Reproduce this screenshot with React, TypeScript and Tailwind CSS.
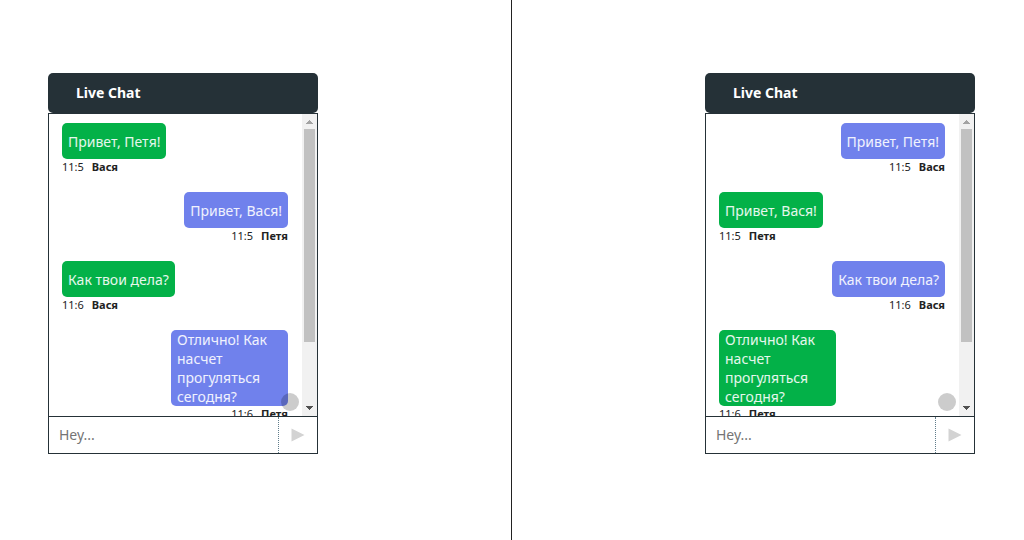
import { useRef, useState } from 'react';
import type { FormEvent } from 'react';

type Message = { author: string; time: string; text: string };

const initialMessages: Message[] = [
  { author: 'Вася', time: '11:5', text: 'Привет, Петя!' },
  { author: 'Петя', time: '11:5', text: 'Привет, Вася!' },
  { author: 'Вася', time: '11:6', text: 'Как твои дела?' },
  { author: 'Петя', time: '11:6', text: 'Отлично! Как насчет прогуляться сегодня?' },
];

function Bubble({ message, own }: { message: Message; own: boolean }) {
  return (
    <li className={`flex flex-col ${own ? 'items-end' : 'items-start'}`}>
      <p
        className={`flex min-h-9 max-w-[117px] items-center rounded-[5px] px-1.5 text-sm leading-[19px] text-white/90 ${
          own ? 'bg-[#7081ec]' : 'bg-[#03b148]'
        }`}
      >
        {message.text}
      </p>
      <p className="flex gap-2 text-[11px] leading-4 text-[#222]">
        <time>{message.time}</time>
        <b>{message.author}</b>
      </p>
    </li>
  );
}

function ScrollBar({ onScroll }: { onScroll: (delta: number) => void }) {
  return (
    <div className="flex w-[15px] shrink-0 flex-col bg-[#f1f1f1]">
      <button
        type="button"
        aria-label="Вверх"
        onClick={() => onScroll(-40)}
        className="flex h-[15px] items-center justify-center"
      >
        <svg width="7" height="4" viewBox="0 0 7 4" fill="#a3a3a3" shapeRendering="crispEdges">
          <path d="M3 0h1v1h1v1h1v1h1v1H0V3h1V2h1V1h1z" />
        </svg>
      </button>
      <div className="flex grow flex-col px-0.5">
        <div className="h-[213px] bg-[#c1c1c1]" />
      </div>
      <button
        type="button"
        aria-label="Вниз"
        onClick={() => onScroll(40)}
        className="flex h-[15px] items-center justify-center pb-0.5"
      >
        <svg width="7" height="4" viewBox="0 0 7 4" fill="#505050" shapeRendering="crispEdges">
          <path d="M0 0h7v1H6v1H5v1H4v1H3V3H2V2H1V1H0z" />
        </svg>
      </button>
    </div>
  );
}

function ChatWidget({
  user,
  messages,
  onSend,
}: {
  user: string;
  messages: Message[];
  onSend: (author: string, text: string) => void;
}) {
  const [draft, setDraft] = useState('');
  const list = useRef<HTMLUListElement>(null);

  const submit = (event: FormEvent) => {
    event.preventDefault();
    if (!draft.trim()) return;
    onSend(user, draft.trim());
    setDraft('');
  };

  return (
    <section className="w-[270px]">
      <header className="flex h-10 items-center rounded-[5px] bg-[#253137] px-7">
        <h2 className="text-sm font-bold text-white">Live Chat</h2>
      </header>
      <div className="border border-[#253137]">
        <div className="relative flex h-[302px]">
          <ul
            ref={list}
            className="flex grow flex-col gap-[17px] overflow-y-auto px-[13px] pt-[9px] pr-[14px] pb-4 [scrollbar-width:none]"
          >
            {messages.map((message, index) => (
              <Bubble key={index} message={message} own={message.author === user} />
            ))}
          </ul>
          <ScrollBar onScroll={(delta) => list.current?.scrollBy({ top: delta })} />
          <button
            type="button"
            aria-label="К последнему сообщению"
            onClick={() => list.current?.scrollTo({ top: list.current.scrollHeight })}
            className="absolute right-[18px] bottom-[5px] size-[18px] rounded-full bg-black/20"
          />
        </div>
        <form onSubmit={submit} className="flex h-[37px] border-t border-[#253137]">
          <input
            type="text"
            aria-label="Сообщение"
            placeholder="Hey..."
            value={draft}
            onChange={(event) => setDraft(event.target.value)}
            className="min-w-0 grow px-2.5 text-sm outline-none placeholder:text-[#757575]"
          />
          <button
            type="submit"
            aria-label="Отправить"
            className="flex w-[39px] items-center justify-center border-l border-dotted border-[#607d8b]"
          >
            <svg width="14" height="14" viewBox="0 0 14 14" fill="#d3d3d3">
              <path d="M0.5 0.5L13.5 7L0.5 13.5z" />
            </svg>
          </button>
        </form>
      </div>
    </section>
  );
}

export default function App() {
  const [messages, setMessages] = useState(initialMessages);

  const send = (author: string, text: string) => {
    const now = new Date();
    setMessages([...messages, { author, text, time: `${now.getHours()}:${now.getMinutes()}` }]);
  };

  return (
    <main className="grid min-h-screen grid-cols-2 bg-white font-['Noto_Sans',sans-serif]">
      <div className="flex justify-start border-r border-[#222] pt-[73px] pb-12 pl-12">
        <ChatWidget user="Петя" messages={messages} onSend={send} />
      </div>
      <div className="flex justify-end pt-[73px] pr-[49px] pb-12">
        <ChatWidget user="Вася" messages={messages} onSend={send} />
      </div>
    </main>
  );
}
